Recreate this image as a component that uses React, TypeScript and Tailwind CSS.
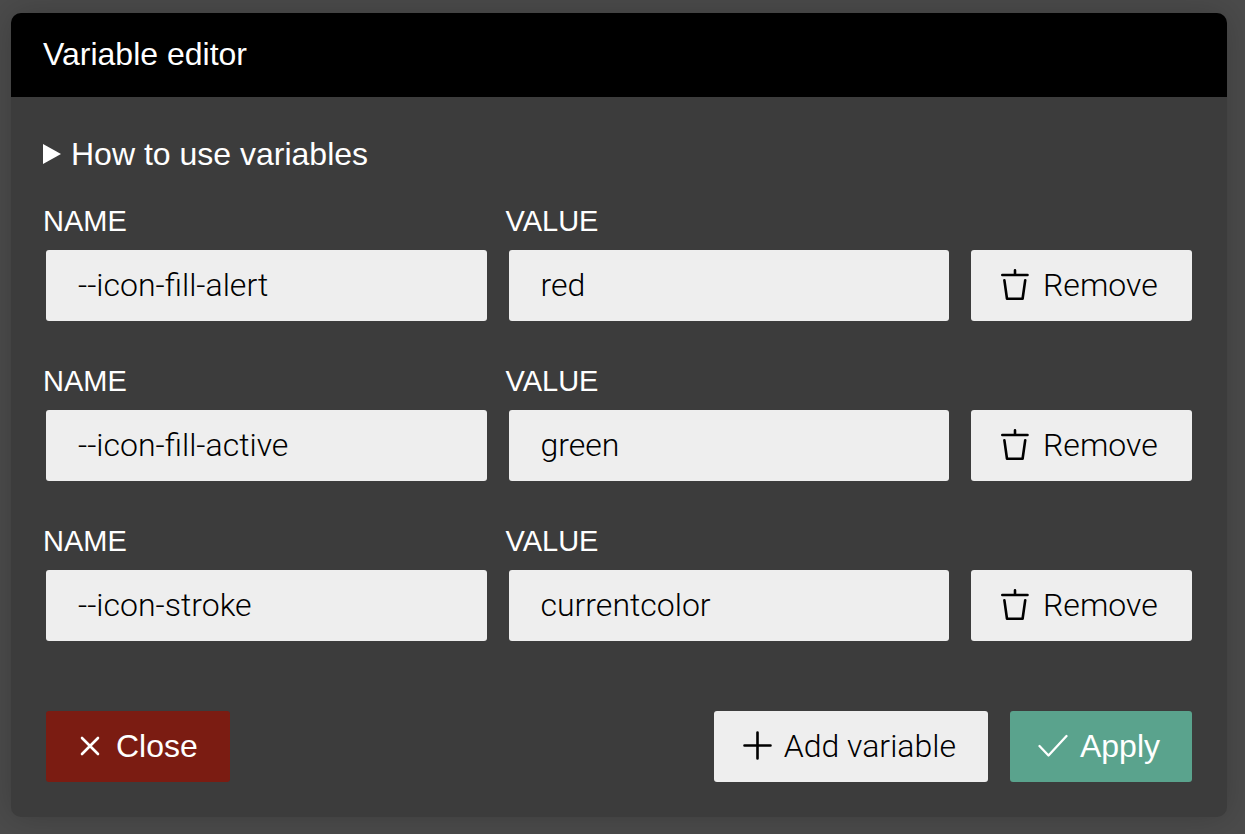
import { useState } from "react";
import type { ReactNode } from "react";

type Variable = { id: number; name: string; value: string };

const initialVariables: Variable[] = [
  { id: 1, name: "--icon-fill-alert", value: "red" },
  { id: 2, name: "--icon-fill-active", value: "green" },
  { id: 3, name: "--icon-stroke", value: "currentcolor" },
];

const buttonBase =
  "m-[3px] flex h-[71px] items-center whitespace-nowrap rounded-[3px] pl-7 pr-8 pb-0.5 text-[32px]";

const Icon = ({ children, width = 2.6 }: { children: ReactNode; width?: number }) => (
  <svg
    viewBox="0 0 32 32"
    className="size-8 shrink-0"
    fill="none"
    stroke="currentColor"
    strokeWidth={width}
    strokeLinecap="round"
    strokeLinejoin="round"
    aria-hidden="true"
  >
    {children}
  </svg>
);

type FieldProps = {
  id: string;
  label: string;
  value: string;
  onChange: (value: string) => void;
};

const Field = ({ id, label, value, onChange }: FieldProps) => (
  <div className="flex min-w-0 flex-1 flex-col">
    <label htmlFor={id} className="mb-2.5 text-[29px] leading-8 uppercase">
      {label}
    </label>
    <input
      id={id}
      type="text"
      value={value}
      onChange={(e) => onChange(e.target.value)}
      className="m-[3px] h-[71px] min-w-0 rounded-[3px] bg-[#eeeeee] px-8 pb-0.5 font-['Roboto',sans-serif] text-[32px] font-light text-black"
    />
  </div>
);

export default function App() {
  const [variables, setVariables] = useState(initialVariables);

  const update = (id: number, change: Partial<Variable>) =>
    setVariables(variables.map((v) => (v.id === id ? { ...v, ...change } : v)));

  const remove = (id: number) => setVariables(variables.filter((v) => v.id !== id));

  const add = () =>
    setVariables([...variables, { id: Date.now(), name: "", value: "" }]);

  return (
    <div className="min-h-screen bg-[#4b4b4b] pt-[13px] pr-[18px] pb-[17px] pl-[11px] font-['Liberation_Sans',Arial,sans-serif] text-white">
      <section className="overflow-hidden rounded-[10px] bg-[#3c3c3c] shadow-[0_0_32px_rgba(0,0,0,0.2)]">
        <header className="bg-black px-8 pt-[23px] pb-[25px]">
          <h1 className="text-[32px] leading-9">Variable editor</h1>
        </header>
        <div className="px-8 pt-[35px] pb-8">
          <details>
            <summary className="flex list-none items-center gap-2.5 text-[32px] leading-[44px]">
              <svg viewBox="0 0 18 20" className="h-5 w-[18px]" fill="currentColor" aria-hidden="true">
                <path d="M0 0L18 10L0 20Z" />
              </svg>
              How to use variables
            </summary>
          </details>
          <div className="mt-[29px] flex flex-col gap-[41px]">
            {variables.map((v) => (
              <div key={v.id} className="flex items-end gap-4">
                <Field
                  id={`name-${v.id}`}
                  label="Name"
                  value={v.name}
                  onChange={(name) => update(v.id, { name })}
                />
                <Field
                  id={`value-${v.id}`}
                  label="Value"
                  value={v.value}
                  onChange={(value) => update(v.id, { value })}
                />
                <button
                  type="button"
                  onClick={() => remove(v.id)}
                  className={`${buttonBase} min-w-[221px] gap-3 bg-[#eeeeee] font-['Roboto',sans-serif] font-light text-black`}
                >
                  <Icon>
                    <path d="M3.3 6H28.5M16 1.4V6M5.4 11.4L8 29.8H23.6L26.2 11.4" />
                  </Icon>
                  Remove
                </button>
              </div>
            ))}
          </div>
          <footer className="mt-16 flex items-center gap-4">
            <button type="button" className={`${buttonBase} mr-auto gap-2.5 bg-[#7b1c12]`}>
              <Icon>
                <path d="M8 8L24 24M24 8L8 24" />
              </Icon>
              Close
            </button>
            <button
              type="button"
              onClick={add}
              className={`${buttonBase} gap-2.5 bg-[#eeeeee] font-['Roboto',sans-serif] font-light text-black`}
            >
              <Icon>
                <path d="M15.5 2.5V28.5M2.5 15.5H28.5" />
              </Icon>
              Add variable
            </button>
            <button type="button" className={`${buttonBase} gap-2.5 bg-[#5aa38d]`}>
              <Icon width={2.3}>
                <path d="M1.5 16L10.5 25.5L28.5 6" />
              </Icon>
              Apply
            </button>
          </footer>
        </div>
      </section>
    </div>
  );
}
